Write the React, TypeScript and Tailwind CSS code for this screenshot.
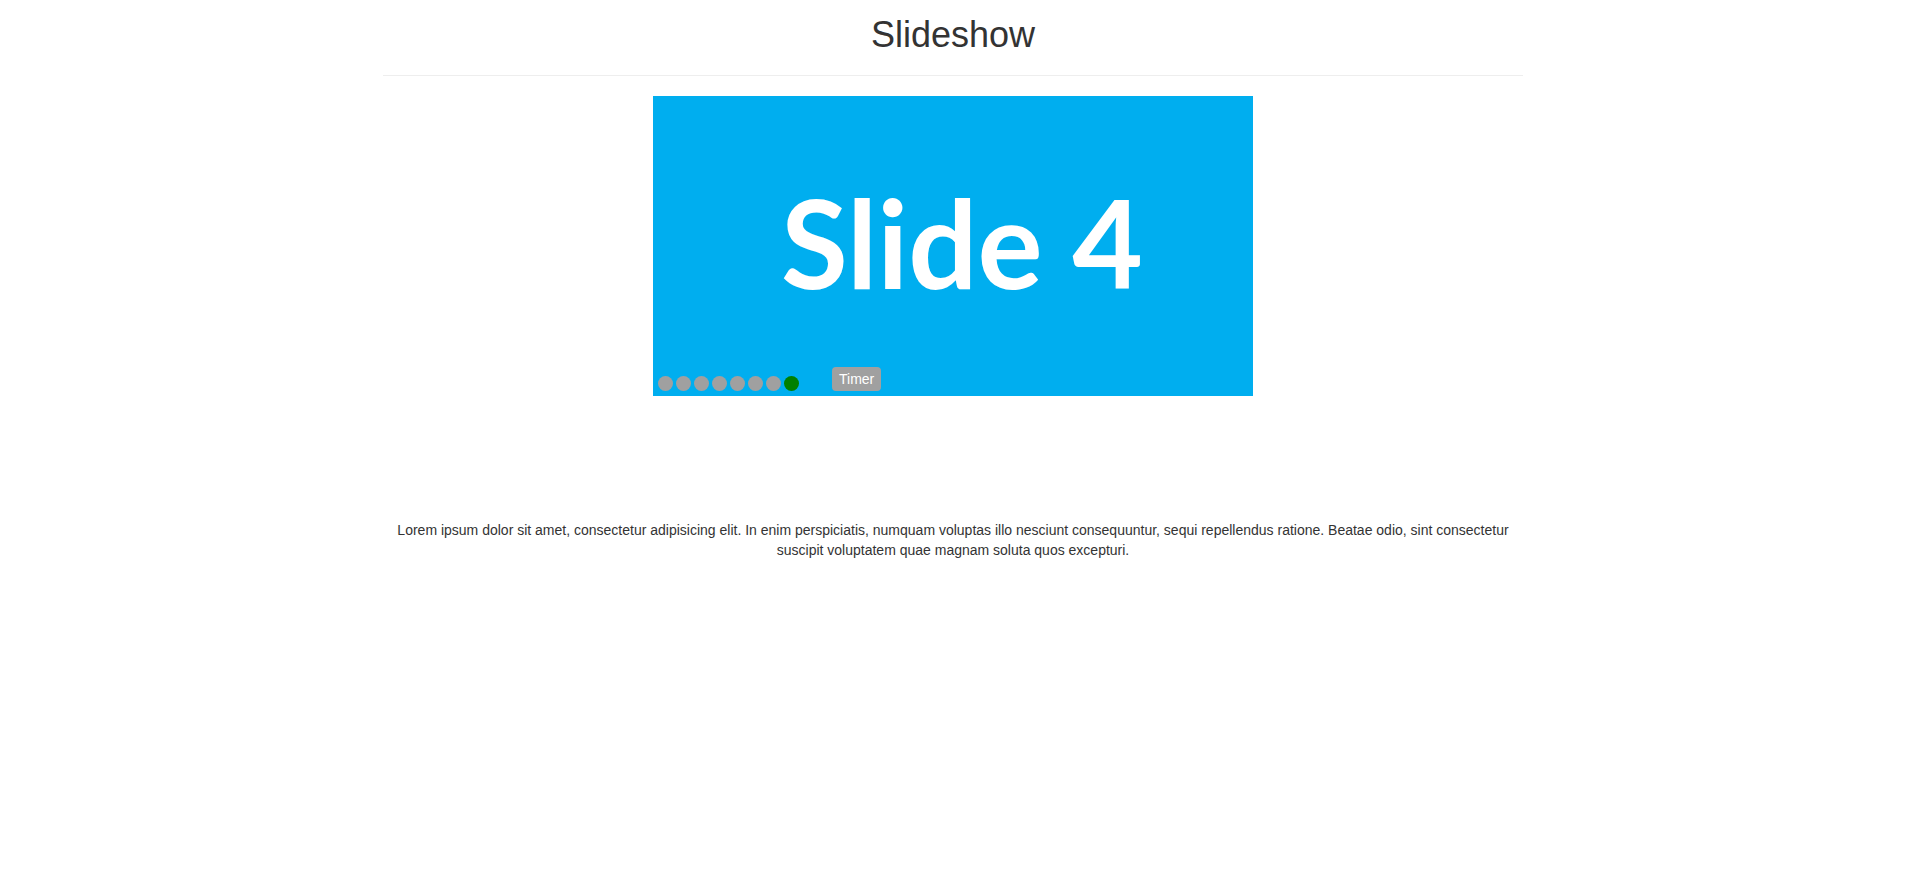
import React, { useState } from "react";

const SLIDE_COUNT = 8;

export default function App() {
  const [current] = useState(7);

  return (
    <div className="min-h-screen bg-white font-['Liberation_Sans',Arial,sans-serif] text-[#333]">
      <div className="w-[1170px] mx-auto px-[15px] text-center">
        <h1 className="mt-[15px] text-[36px] leading-[39.6px] font-normal">
          Slideshow
        </h1>
        <hr className="mt-5 mb-5 border-0 border-t border-[#eee]" />

        <div className="relative w-[600px] h-[300px] mx-auto bg-[#00aeef] flex items-center justify-center">
          <span className="pl-[18px] pb-[8px] font-['Lato',sans-serif] font-bold text-[122px] leading-none text-white">
            Slide 4
          </span>

          {/* controls over the slide */}
          <div className="absolute left-[5px] bottom-[5px] flex items-end">
            <div className="flex gap-[3px]">
              {Array.from({ length: SLIDE_COUNT }).map((_, i) => (
                <span
                  key={i}
                  className={
                    i === current
                      ? "w-[15px] h-[15px] rounded-full bg-[#008000]"
                      : "w-[15px] h-[15px] rounded-full bg-[#a0a0a0]"
                  }
                />
              ))}
            </div>
            <button className="ml-[33px] h-[24px] px-[7px] rounded-[4px] bg-[#a0a0a0] text-white text-[14px] leading-[24px]">
              Timer
            </button>
          </div>
        </div>

        <p className="mt-[124px] text-[14px] leading-5 text-[#333]">
          Lorem ipsum dolor sit amet, consectetur adipisicing elit. In enim
          perspiciatis, numquam voluptas illo nesciunt consequuntur, sequi
          repellendus ratione. Beatae odio, sint consectetur suscipit voluptatem
          quae magnam soluta quos excepturi.
        </p>
      </div>
    </div>
  );
}
